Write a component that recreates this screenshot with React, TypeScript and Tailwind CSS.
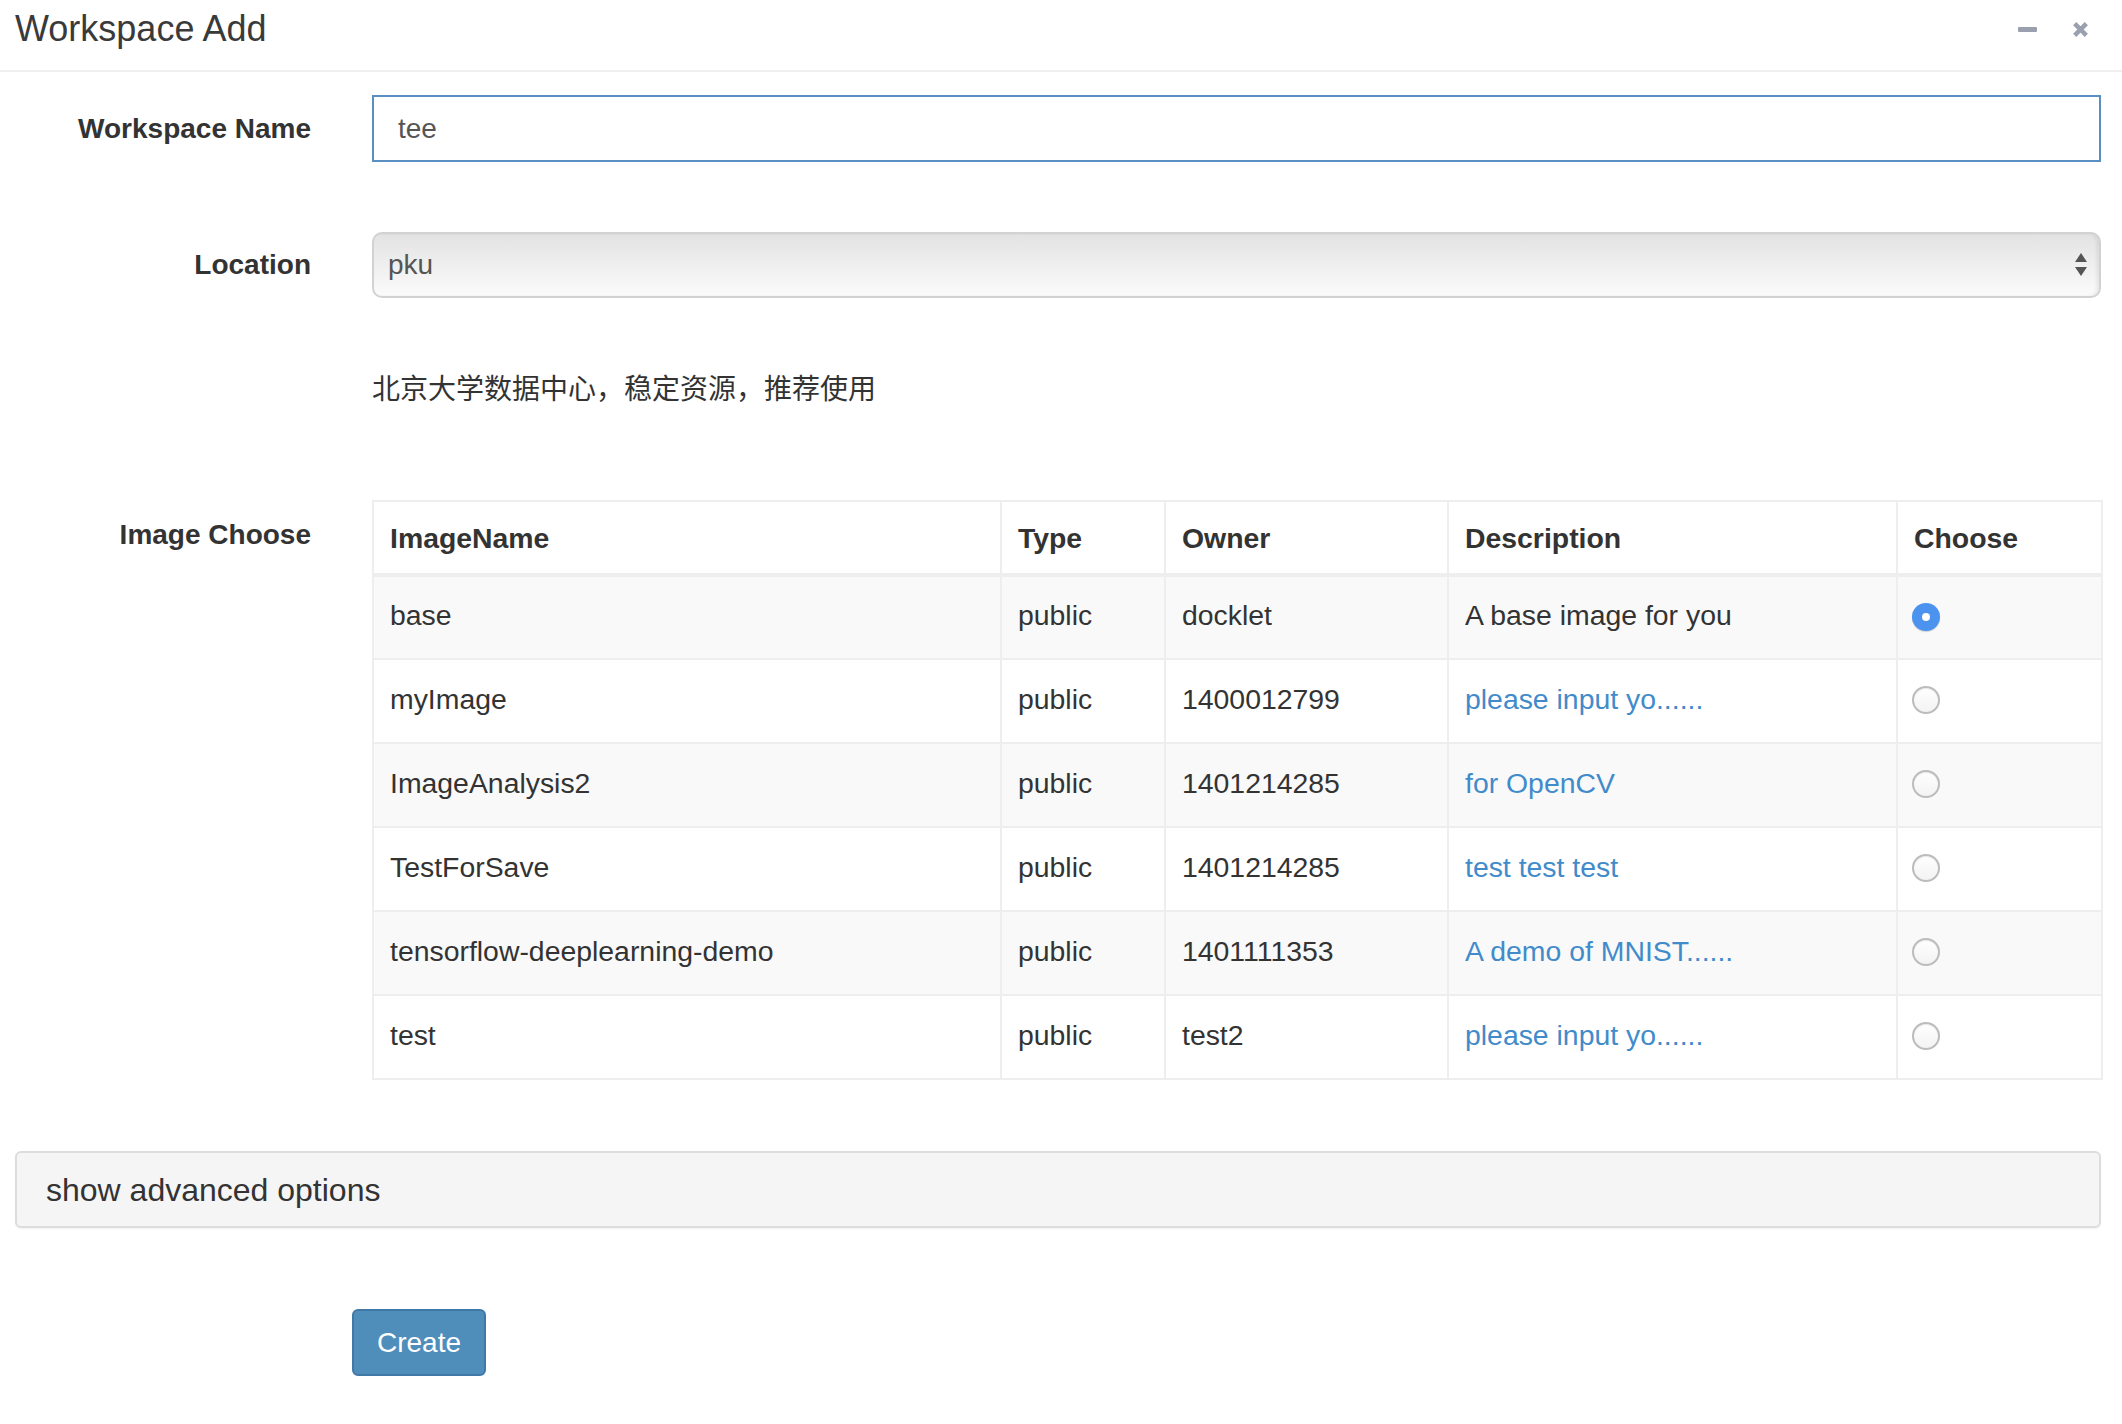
import React from 'react'

type ImageRow = {
  name: string
  type: string
  owner: string
  description: string
  link: boolean
}

const images: ImageRow[] = [
  { name: 'base', type: 'public', owner: 'docklet', description: 'A base image for you', link: false },
  { name: 'myImage', type: 'public', owner: '1400012799', description: 'please input yo......', link: true },
  { name: 'ImageAnalysis2', type: 'public', owner: '1401214285', description: 'for OpenCV', link: true },
  { name: 'TestForSave', type: 'public', owner: '1401214285', description: 'test test test', link: true },
  { name: 'tensorflow-deeplearning-demo', type: 'public', owner: '1401111353', description: 'A demo of MNIST......', link: true },
  { name: 'test', type: 'public', owner: 'test2', description: 'please input yo......', link: true },
]

function Radio({ checked }: { checked: boolean }) {
  if (checked) {
    return (
      <span className="flex h-[28px] w-[28px] items-center justify-center rounded-full bg-[#4b93ee] shadow-[0_1px_1px_rgba(0,0,0,0.15)]">
        <span className="h-[8px] w-[8px] rounded-full bg-white" />
      </span>
    )
  }
  return (
    <span className="block h-[28px] w-[28px] rounded-full border-2 border-[#bcbcbc] bg-gradient-to-b from-white to-[#f3f3f3] shadow-[inset_0_1px_1px_rgba(0,0,0,0.08)]" />
  )
}

export default function App() {
  const labelCls = 'w-[311px] shrink-0 text-right text-[28px] font-bold text-[#333]'
  const cellCls = 'border-2 border-[#eeeeee] px-[16px] pb-[4px] align-middle'

  return (
    <div className="min-h-[1424px] w-[2122px] bg-white font-['Liberation_Sans','Noto_Sans_CJK_SC',sans-serif] text-[#333]">
      {/* header */}
      <div className="flex h-[72px] items-center justify-between border-b-2 border-[#efefef] pl-[15px] pr-[33px] pb-[12px]">
        <h4 className="text-[36px] font-normal leading-none text-[#3a3a3a]">Workspace Add</h4>
        <div className="flex items-center gap-[35px]">
          <span className="block h-[5px] w-[19px] rounded-[1px] bg-[#9aa0ad]" />
          <svg width="17" height="17" viewBox="0 0 16 16">
            <path d="M2.5 2.5 L13.5 13.5 M13.5 2.5 L2.5 13.5" stroke="#9aa0ad" strokeWidth="4.2" strokeLinecap="butt" />
          </svg>
        </div>
      </div>

      <div className="pr-[21px]">
        {/* workspace name */}
        <div className="mt-[23px] flex items-center gap-[61px]">
          <label className={labelCls}>Workspace Name</label>
          <div className="flex h-[67px] flex-1 items-center border-2 border-[#5a8fc2] px-[24px] text-[28px] text-[#555]">
            tee
          </div>
        </div>

        {/* location */}
        <div className="mt-[70px] flex items-center gap-[61px]">
          <label className={labelCls}>Location</label>
          <div className="flex h-[66px] flex-1 items-center justify-between rounded-[10px] border-2 border-[#d2d2d2] bg-gradient-to-b from-[#e3e3e3] to-[#fbfbfb] pl-[14px] pr-[11px] text-[28px] text-[#555] shadow-[inset_-3px_0_3px_rgba(0,0,0,0.06)]">
            <span>pku</span>
            <svg width="14" height="26" viewBox="0 0 14 26">
              <path d="M7 1 L13 10 L1 10 Z" fill="#555" />
              <path d="M1 15 L13 15 L7 24 Z" fill="#555" />
            </svg>
          </div>
        </div>

        {/* location hint */}
        <div className="mt-[72px] pl-[372px] text-[28px] leading-[40px] text-[#333]">
          北京大学数据中心，稳定资源，推荐使用
        </div>

        {/* image choose */}
        <div className="mt-[90px] flex items-start gap-[61px]">
          <label className={`${labelCls} pt-[14px]`}>Image Choose</label>
          <table className="w-[1729px] table-fixed border-collapse text-[28.4px]">
            <colgroup>
              <col className="w-[628px]" />
              <col className="w-[164px]" />
              <col className="w-[283px]" />
              <col className="w-[449px]" />
              <col className="w-[205px]" />
            </colgroup>
            <thead>
              <tr className="h-[74px]">
                {['ImageName', 'Type', 'Owner', 'Description', 'Choose'].map(h => (
                  <th key={h} className="border-2 border-b-4 border-[#eeeeee] px-[16px] pt-[2px] text-left align-middle font-bold">
                    {h}
                  </th>
                ))}
              </tr>
            </thead>
            <tbody>
              {images.map((img, i) => (
                <tr key={img.name} className={`h-[84px] ${i % 2 === 0 ? 'bg-[#f9f9f9]' : 'bg-white'}`}>
                  <td className={cellCls}>{img.name}</td>
                  <td className={cellCls}>{img.type}</td>
                  <td className={cellCls}>{img.owner}</td>
                  <td className={`${cellCls} ${img.link ? 'text-[#428bca]' : ''}`}>{img.description}</td>
                  <td className="border-2 border-[#eeeeee] pl-[14px] pb-[2px] align-middle">
                    <Radio checked={i === 0} />
                  </td>
                </tr>
              ))}
            </tbody>
          </table>
        </div>

        {/* advanced options */}
        <div className="ml-[15px] mt-[71px] flex h-[77px] items-center rounded-[6px] border-2 border-[#dddddd] bg-[#f5f5f5] pl-[29px] text-[32px] text-[#333] shadow-[0_1px_2px_rgba(0,0,0,0.06)]">
          show advanced options
        </div>

        {/* submit */}
        <div className="mt-[81px] pl-[352px]">
          <button className="h-[67px] w-[134px] rounded-[6px] border-2 border-[#4079a8] bg-[#4f8dbb] text-[28px] text-white">
            Create
          </button>
        </div>
      </div>
    </div>
  )
}
